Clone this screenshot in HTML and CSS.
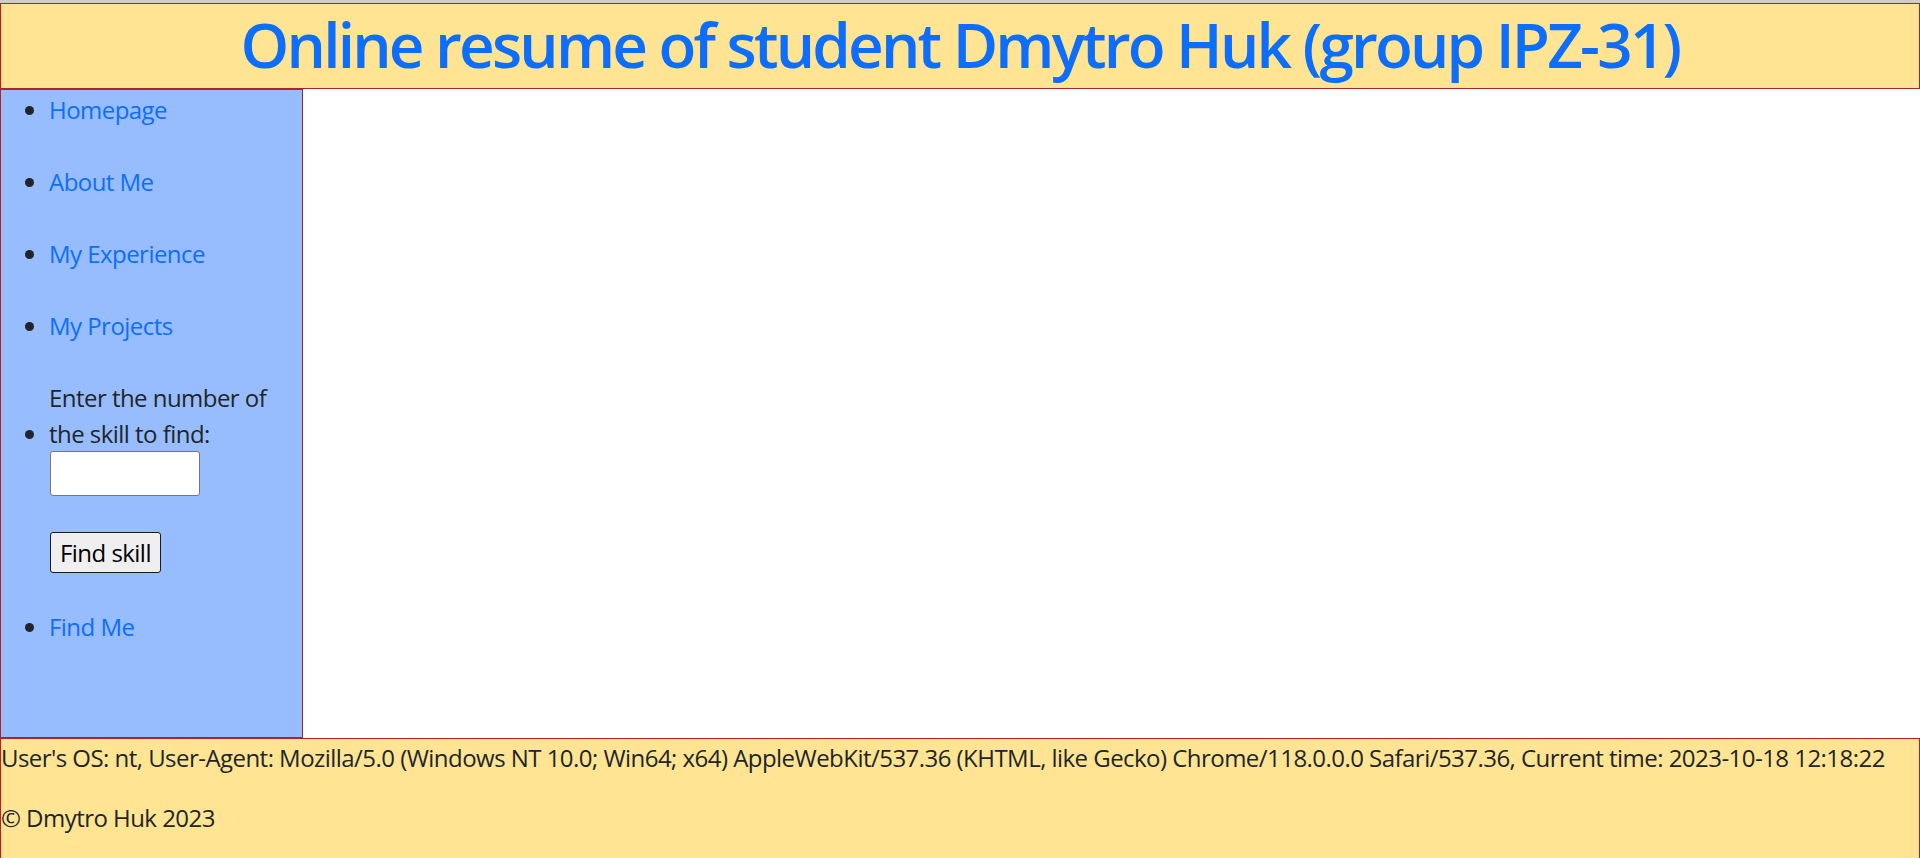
FILE: index.html
```html
<!DOCTYPE html>
<html lang="en">
<head>
<meta charset="utf-8">
<title>Online resume of student Dmytro Huk</title>
<link rel="stylesheet" href="styles.css">
</head>
<body>
<div class="top-strip"></div>
<header class="site-header">
  <h1 class="site-title">Online resume of student Dmytro Huk (group IPZ-31)</h1>
</header>
<div class="layout">
  <nav class="sidebar">
    <ul class="nav-list">
      <li class="nav-item"><a class="nav-link" href="#">Homepage</a></li>
      <li class="nav-item"><a class="nav-link" href="#">About Me</a></li>
      <li class="nav-item"><a class="nav-link" href="#">My Experience</a></li>
      <li class="nav-item"><a class="nav-link" href="#">My Projects</a></li>
      <li class="nav-item">
        <form class="skill-form">
          <label class="skill-label" for="skill">Enter the number of the skill to find:</label>
          <input class="skill-input" id="skill" type="text">
          <button class="skill-button" type="button">Find skill</button>
        </form>
      </li>
      <li class="nav-item"><a class="nav-link" href="#">Find Me</a></li>
    </ul>
  </nav>
  <main class="content"></main>
</div>
<footer class="site-footer">
  <p class="footer-line">User's OS: nt, User-Agent: Mozilla/5.0 (Windows NT 10.0; Win64; x64) AppleWebKit/537.36 (KHTML, like Gecko) Chrome/118.0.0.0 Safari/537.36, Current time: 2023-10-18 12:18:22</p>
  <p class="footer-line">© Dmytro Huk 2023</p>
</footer>
</body>
</html>
```
FILE: styles.css
```css
* { box-sizing: border-box; }

html, body {
  margin: 0;
  padding: 0;
}

body {
  font-family: "Open Sans", "Noto Sans", sans-serif;
  font-size: 24px;
  line-height: 1.5;
  letter-spacing: -0.0225em;
  color: #212529;
  background: #ffffff;
}

.top-strip {
  height: 3px;
  background: #cdcdcd;
}

.site-header {
  height: 86px;
  background: #ffe593;
  border: 1px solid #b22222;
  display: flex;
  justify-content: center;
  align-items: flex-start;
}

.site-title {
  margin: 0;
  padding-top: 3px;
  font-size: 62px;
  font-weight: 600;
  line-height: 74px;
  letter-spacing: -0.045em;
  color: #0d6efd;
}

.layout {
  display: flex;
  height: 649px;
}

.sidebar {
  width: 303px;
  flex: none;
  background: #98bdfe;
  border: 1px solid #b22222;
}

.content {
  flex: 1;
  background: #ffffff;
}

.nav-list {
  margin: 0;
  padding: 2px 0 0 48px;
}

.nav-item {
  margin-bottom: 36px;
}

.nav-link {
  color: #0d6efd;
  text-decoration: none;
}

.skill-form {
  margin: 0;
}

.skill-label {
  display: inline-block;
  width: 240px;
}

.skill-input {
  display: block;
  width: 150px;
  height: 45px;
  margin: -1px 0 0 1px;
  border: 1px solid #767676;
  border-radius: 3px;
  background: #ffffff;
  font: inherit;
  padding: 1px 3px;
}

.skill-button {
  display: block;
  height: 41px;
  margin: 36px 0 0 1px;
  padding: 0 9px;
  border: 1px solid #1a1a1a;
  border-radius: 3px;
  background: #efefef;
  color: #000000;
  font-family: inherit;
  font-size: 24px;
  line-height: 36px;
  letter-spacing: -0.0225em;
}

.site-footer {
  background: #ffe593;
  border: 1px solid #b22222;
  padding-top: 1px;
}

.footer-line {
  margin: 0 0 24px;
}
```
